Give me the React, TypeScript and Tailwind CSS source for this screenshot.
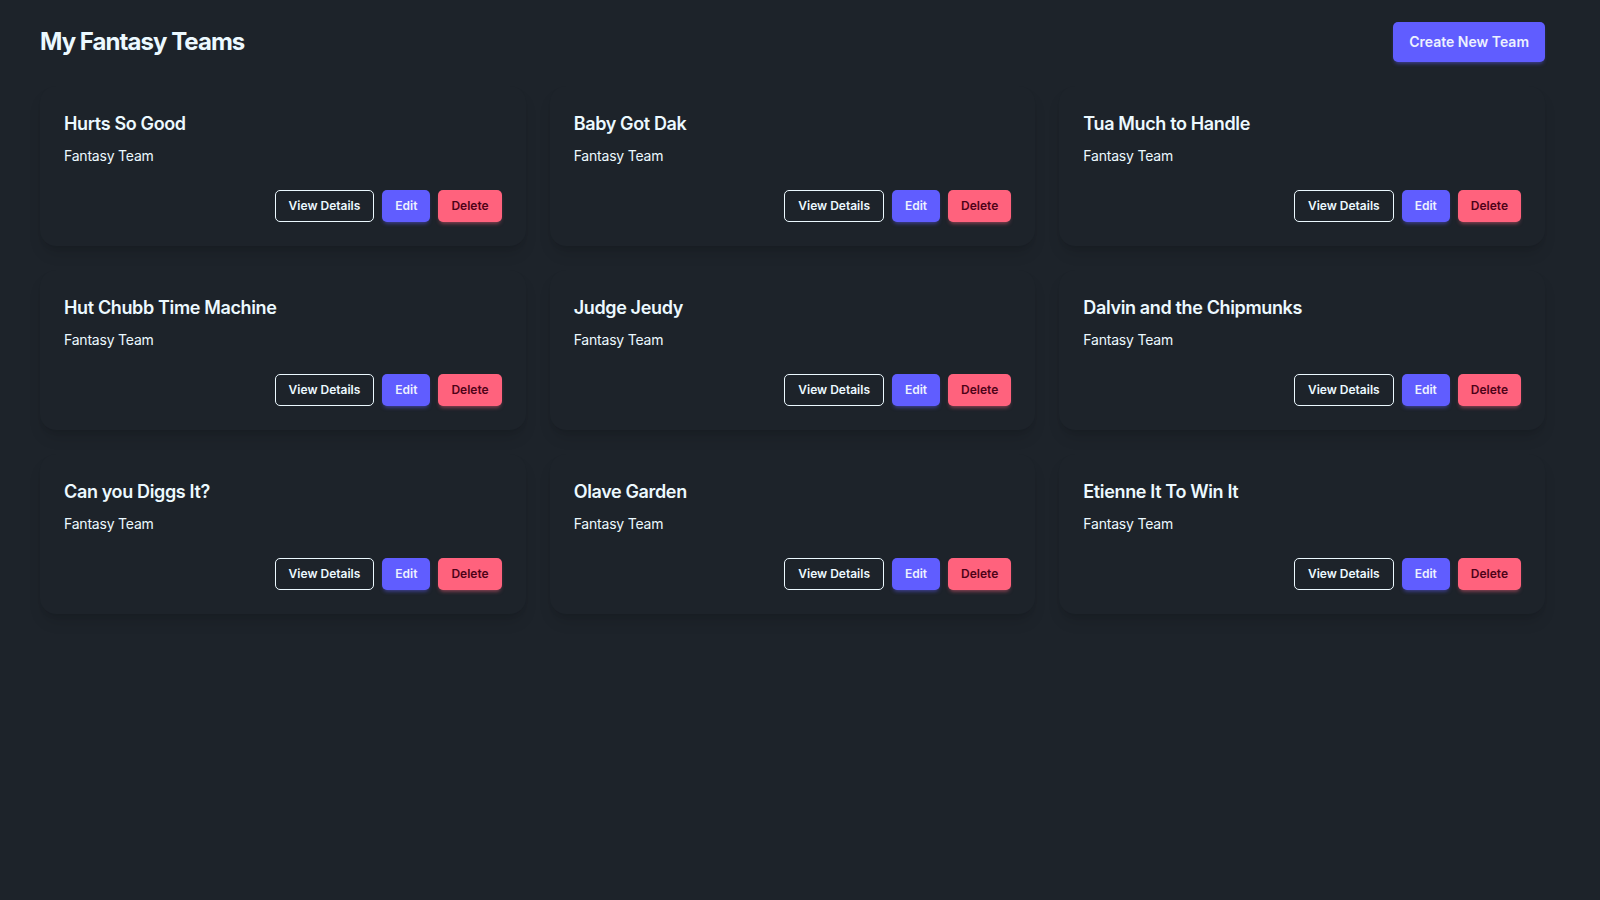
const teams = [
  'Hurts So Good',
  'Baby Got Dak',
  'Tua Much to Handle',
  'Hut Chubb Time Machine',
  'Judge Jeudy',
  'Dalvin and the Chipmunks',
  'Can you Diggs It?',
  'Olave Garden',
  'Etienne It To Win It',
]

function TeamCard({ name }: { name: string }) {
  return (
    <div className="rounded-2xl bg-[#1d232a] shadow-[0_10px_15px_-3px_rgba(0,0,0,0.12),0_4px_6px_-4px_rgba(0,0,0,0.12)]">
      <div className="flex flex-col gap-2 p-6">
        <h2 className="text-lg leading-7 font-semibold tracking-[-0.02em] text-[#ecf9ff]">{name}</h2>
        <p className="text-sm leading-5 tracking-[-0.015em] text-[#ecf9ff]">Fantasy Team</p>
        <div className="mt-4 flex justify-end gap-2">
          <button className="h-8 rounded-[5px] border border-[#ecf9ff] px-[13px] text-xs font-semibold text-[#ecf9ff]">
            View Details
          </button>
          <button className="h-8 rounded-[5px] bg-[#605dff] px-[13px] text-xs font-semibold text-[#edf1fe] shadow-[0_3px_4px_-2px_rgba(96,93,255,0.6)]">
            Edit
          </button>
          <button className="h-8 rounded-[5px] bg-[#ff627d] px-[13px] text-xs font-semibold text-[#4d0218] shadow-[0_3px_4px_-2px_rgba(255,98,125,0.6)]">
            Delete
          </button>
        </div>
      </div>
    </div>
  )
}

export default function App() {
  return (
    <div className="min-h-screen bg-[#1d232a] font-['Inter',sans-serif]">
      <div className="w-[1585px] px-10 pt-[22px]">
        {/* Header */}
        <div className="mb-6 flex items-center justify-between">
          <h1 className="text-2xl font-bold tracking-[-0.04em] text-[#ecf9ff]">My Fantasy Teams</h1>
          <button className="h-10 rounded-[5px] bg-[#605dff] px-4 text-sm font-semibold text-[#edf1fe] shadow-[0_3px_4px_-2px_rgba(96,93,255,0.6)]">
            Create New Team
          </button>
        </div>

        {/* Teams */}
        <div className="grid grid-cols-3 gap-6">
          {teams.map((name) => (
            <TeamCard key={name} name={name} />
          ))}
        </div>
      </div>
    </div>
  )
}
